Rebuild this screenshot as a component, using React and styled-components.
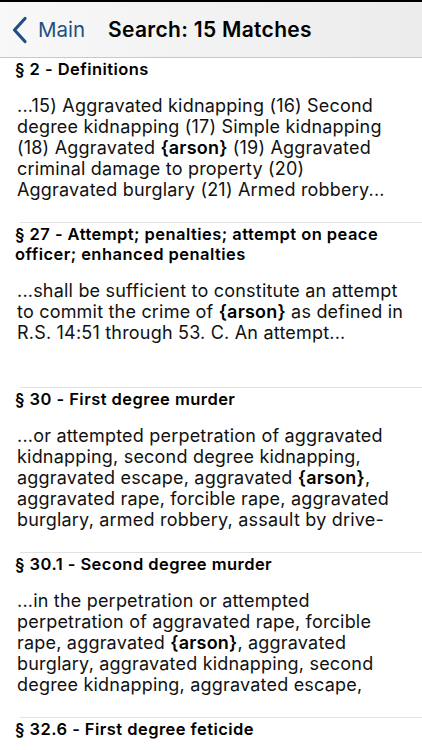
import React from 'react'
import styled, { createGlobalStyle } from 'styled-components'

const GlobalStyle = createGlobalStyle`
    html, body {
        margin:0;
        padding:0;
        background:#fff;
    }
    body {
        font-family:Inter, "Liberation Sans", Arial, sans-serif;
        color:#111;
        -webkit-font-smoothing:antialiased;
    }
`

const Screen = styled.div`
    width:422px;
    height:750px;
    overflow:hidden;
    display:flex;
    flex-direction:column;
    background:#fff;
`

const Header = styled.div`
    flex:none;
    height:58px;
    box-sizing:border-box;
    border-top:2px solid #000;
    border-bottom:1px solid #c8c8c8;
    background:linear-gradient(to right, #f8f8f8, #ececec);
    display:flex;
    align-items:center;
    padding-left:12px;
`

const Back = styled.div`
    display:flex;
    align-items:center;
    gap:10px;
    color:#1f4f82;
    font-size:20.5px;
    margin-right:23px;
`

const Title = styled.div`
    font-size:21px;
    letter-spacing:0.3px;
    font-weight:600;
    color:#000;
`

const List = styled.div`
    flex:1;
    overflow:hidden;
`

const Row = styled.div`
    height:${p => (p.$first ? '164px' : '165px')};
    box-sizing:border-box;
    overflow:hidden;
`

const Separator = styled.div`
    height:1px;
    margin-left:20px;
    background:#e2e2e2;
`

const Heading = styled.div`
    margin:1px 0 0 15px;
    padding-right:20px;
    font-size:16.5px;
    letter-spacing:0.45px;
    line-height:20px;
    font-weight:600;
    color:#000;
`

const Snippet = styled.div`
    margin:16px 4px 0 17px;
    font-size:18px;
    letter-spacing:0.2px;
    line-height:21px;
    white-space:pre-line;
    color:#111;

    b {
        font-weight:600;
        color:#000;
    }
`

const ChevronLeft = () => (
    <svg width="16" height="28" viewBox="0 0 16 28">
        <path d="M13 2.5 L2.5 14 L13 25.5" fill="none" stroke="currentColor" strokeWidth="3.2" strokeLinecap="round" strokeLinejoin="round" />
    </svg>
)

const results = [
    {
        heading: '§ 2 - Definitions',
        before: '...15) Aggravated kidnapping (16) Second\ndegree kidnapping (17) Simple kidnapping\n(18) Aggravated ',
        after: ' (19) Aggravated\ncriminal damage to property (20)\nAggravated burglary (21) Armed robbery...',
    },
    {
        heading: '§ 27 - Attempt; penalties; attempt on peace officer; enhanced penalties',
        before: '...shall be sufficient to constitute an attempt\nto commit the crime of ',
        after: ' as defined in\nR.S. 14:51 through 53. C. An attempt...',
    },
    {
        heading: '§ 30 - First degree murder',
        before: '...or attempted perpetration of aggravated\nkidnapping, second degree kidnapping,\naggravated escape, aggravated ',
        after: ',\naggravated rape, forcible rape, aggravated\nburglary, armed robbery, assault by drive-',
    },
    {
        heading: '§ 30.1 - Second degree murder',
        before: '...in the perpetration or attempted\nperpetration of aggravated rape, forcible\nrape, aggravated ',
        after: ', aggravated\nburglary, aggravated kidnapping, second\ndegree kidnapping, aggravated escape,',
    },
    {
        heading: '§ 32.6 - First degree feticide',
        before: '',
        after: '',
    },
]

export default function App() {
    return (
        <Screen>
            <GlobalStyle />
            <Header>
                <Back>
                    <ChevronLeft />
                    <span>Main</span>
                </Back>
                <Title>Search: 15 Matches</Title>
            </Header>
            <List>
                {results.map((r, i) => (
                    <Row key={r.heading} $first={i === 0}>
                        {i > 0 && <Separator />}
                        <Heading>{r.heading}</Heading>
                        {r.before && (
                            <Snippet>
                                {r.before}<b>{'{arson}'}</b>{r.after}
                            </Snippet>
                        )}
                    </Row>
                ))}
            </List>
        </Screen>
    )
}
